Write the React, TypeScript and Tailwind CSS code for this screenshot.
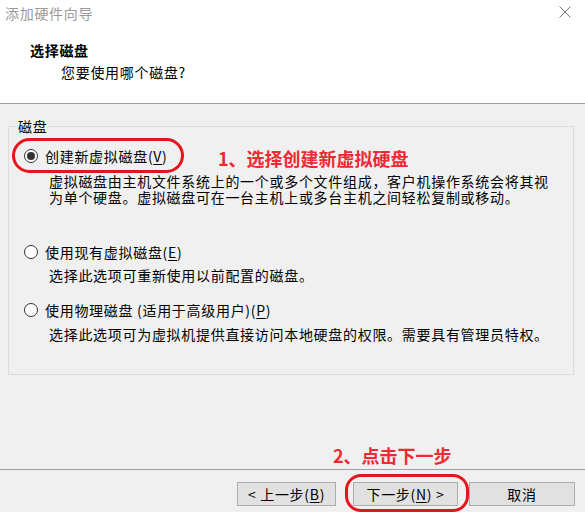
import React from "react"

function Radio({ checked }: { checked?: boolean }) {
  return (
    <span className="w-[14px] h-[14px] rounded-full border border-[#333] bg-white flex items-center justify-center shrink-0">
      {checked && <span className="w-[8px] h-[8px] rounded-full bg-[#333]" />}
    </span>
  )
}

function Key({ k }: { k: string }) {
  return (
    <>
      (<span className="underline underline-offset-2">{k}</span>)
    </>
  )
}

function Option({ checked, label, children, className }: { checked?: boolean; label: React.ReactNode; children: React.ReactNode; className?: string }) {
  return (
    <div className={className}>
      <div className="flex items-center h-[18px] gap-[7px]">
        <Radio checked={checked} />
        <span className="leading-[18px]">{label}</span>
      </div>
      {children}
    </div>
  )
}

function WizButton({ children, className }: { children: React.ReactNode; className?: string }) {
  return (
    <button className={"h-[24px] bg-[#e1e1e1] border border-[#adadad] flex items-center justify-center leading-none " + (className ?? "")}>
      {children}
    </button>
  )
}

export default function App() {
  return (
    <div className="relative w-[585px] h-[512px] overflow-hidden bg-[#f0f0f0] text-black text-[14px] tracking-[0.7px] font-['Microsoft_YaHei','Noto_Sans_CJK_SC',sans-serif] flex flex-col">
      <header className="bg-white h-[104px] border-b border-[#a0a0a0] shrink-0">
        <div className="h-[26px] flex items-center justify-between pl-[5px] pr-[14px]">
          <span className="text-[#9a9a9a]">添加硬件向导</span>
          <svg width="12" height="12" viewBox="0 0 12 12" className="mt-[-2px]">
            <path d="M0.5 0.5 L11.5 11.5 M11.5 0.5 L0.5 11.5" stroke="#707070" strokeWidth="1" />
          </svg>
        </div>
        <div className="pl-[30px] mt-[14px] leading-[20px] font-bold">选择磁盘</div>
        <div className="pl-[61px] mt-[2px] leading-[20px]">您要使用哪个磁盘?</div>
      </header>

      <fieldset className="ml-[8px] mr-[11px] mt-[14px] h-[257px] border border-[#dcdcdc] pl-[8px] shrink-0">
        <legend className="leading-[17px] px-[1px]">磁盘</legend>
        <div className="pl-[7px]">
          <Option checked className="mt-[12px]" label={<>创建新虚拟磁盘<Key k="V" /></>}>
            <div className="pl-[25px] mt-[8px] leading-[16px] pr-[10px]">
              虚拟磁盘由主机文件系统上的一个或多个文件组成，客户机操作系统会将其视为单个硬盘。虚拟磁盘可在一台主机上或多台主机之间轻松复制或移动。
            </div>
          </Option>
          <Option className="mt-[38px]" label={<>使用现有虚拟磁盘<Key k="E" /></>}>
            <div className="pl-[25px] mt-[6px] leading-[16px]">选择此选项可重新使用以前配置的磁盘。</div>
          </Option>
          <Option className="mt-[18px]" label={<>使用物理磁盘 (适用于高级用户)<Key k="P" /></>}>
            <div className="pl-[25px] mt-[7px] leading-[16px]">选择此选项可为虚拟机提供直接访问本地硬盘的权限。需要具有管理员特权。</div>
          </Option>
        </div>
      </fieldset>

      <div className="flex-1" />

      <footer className="h-[43px] border-t border-[#a0a0a0] pt-[12px] pr-[10px] flex justify-end items-start shrink-0">
        <WizButton className="w-[99px]">&lt; 上一步<Key k="B" /></WizButton>
        <WizButton className="w-[105px] ml-[17px]">下一步<Key k="N" /> &gt;</WizButton>
        <WizButton className="w-[106px] ml-[11px]">取消</WizButton>
      </footer>

      <div className="absolute left-[12px] top-[138px] w-[172px] h-[35px] border-[3px] border-[#e8141c] rounded-[18px]" />
      <div className="absolute left-[218px] top-[147px] leading-[22px] text-[18px] font-bold tracking-[0px] text-[#ee2a33]">1、选择创建新虚拟硬盘</div>
      <div className="absolute left-[333px] top-[444px] leading-[22px] text-[18px] font-bold tracking-[0px] text-[#ee2a33]">2、点击下一步</div>
      <div className="absolute left-[345px] top-[474px] w-[124px] h-[38px] border-[3px] border-[#e8141c] rounded-[16px]" />
    </div>
  )
}
